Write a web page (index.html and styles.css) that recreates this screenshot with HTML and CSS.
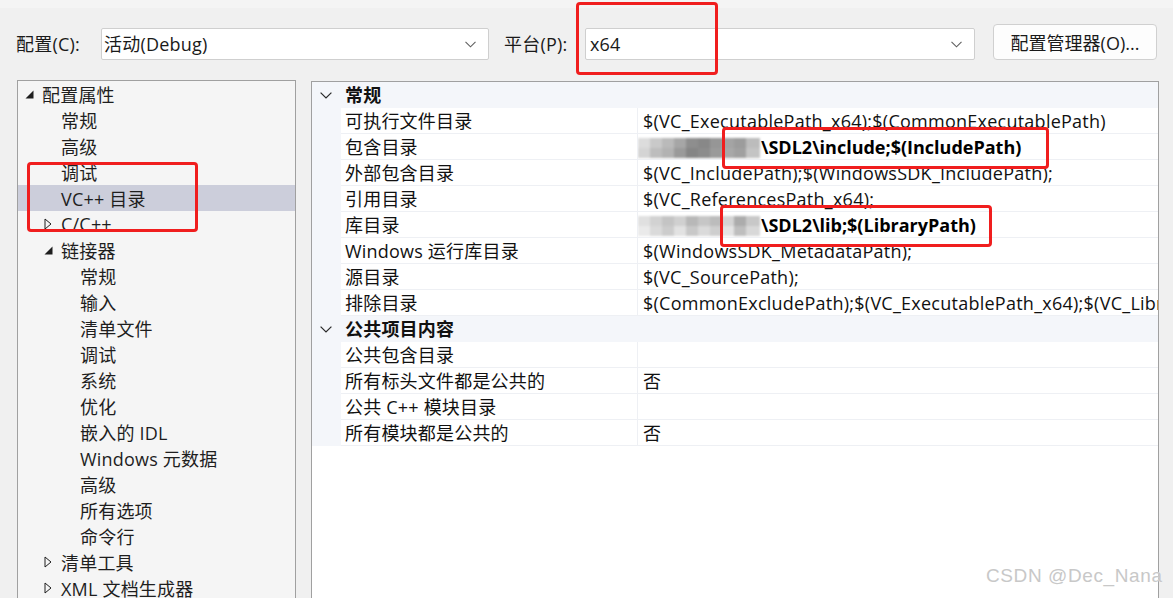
FILE: index.html
```html
<!DOCTYPE html>
<html>
<head>
<meta charset="utf-8">
<link rel="stylesheet" href="styles.css">
</head>
<body>
<div class="app">
  <div class="band"></div>
  <div class="topbar">
    <span class="lbl lbl1">配置(C):</span>
    <div class="combo combo1"><span class="ctext">活动(Debug)</span><svg class="chev" width="11" height="7" viewBox="0 0 11 7"><polyline points="0.5,0.8 5.5,5.8 10.5,0.8" fill="none" stroke="#606060" stroke-width="1.1"/></svg></div>
    <span class="lbl lbl2">平台(P):</span>
    <div class="combo combo2"><span class="ctext">x64</span><svg class="chev" width="11" height="7" viewBox="0 0 11 7"><polyline points="0.5,0.8 5.5,5.8 10.5,0.8" fill="none" stroke="#606060" stroke-width="1.1"/></svg></div>
    <button class="btn">配置管理器(O)...</button>
  </div>
  <div class="main">
    <div class="tree">
      <div class="trow l0"><span class="tg"><svg width="9" height="9" viewBox="0 0 9 9"><polygon points="8.5,0.5 8.5,8.5 0.5,8.5" fill="#1e1e1e"/></svg></span><span>配置属性</span></div>
      <div class="trow l1"><span class="tg"></span><span>常规</span></div>
      <div class="trow l1"><span class="tg"></span><span>高级</span></div>
      <div class="trow l1"><span class="tg"></span><span>调试</span></div>
      <div class="trow l1 sel"><span class="tg"></span><span>VC++ 目录</span></div>
      <div class="trow l1"><span class="tg"><svg width="8" height="12" viewBox="0 0 8 12"><polygon points="1,1 7,6 1,11" fill="none" stroke="#1e1e1e" stroke-width="1"/></svg></span><span>C/C++</span></div>
      <div class="trow l1"><span class="tg"><svg width="9" height="9" viewBox="0 0 9 9"><polygon points="8.5,0.5 8.5,8.5 0.5,8.5" fill="#1e1e1e"/></svg></span><span>链接器</span></div>
      <div class="trow l2"><span class="tg"></span><span>常规</span></div>
      <div class="trow l2"><span class="tg"></span><span>输入</span></div>
      <div class="trow l2"><span class="tg"></span><span>清单文件</span></div>
      <div class="trow l2"><span class="tg"></span><span>调试</span></div>
      <div class="trow l2"><span class="tg"></span><span>系统</span></div>
      <div class="trow l2"><span class="tg"></span><span>优化</span></div>
      <div class="trow l2"><span class="tg"></span><span>嵌入的 IDL</span></div>
      <div class="trow l2"><span class="tg"></span><span>Windows 元数据</span></div>
      <div class="trow l2"><span class="tg"></span><span>高级</span></div>
      <div class="trow l2"><span class="tg"></span><span>所有选项</span></div>
      <div class="trow l2"><span class="tg"></span><span>命令行</span></div>
      <div class="trow l1"><span class="tg"><svg width="8" height="12" viewBox="0 0 8 12"><polygon points="1,1 7,6 1,11" fill="none" stroke="#1e1e1e" stroke-width="1"/></svg></span><span>清单工具</span></div>
      <div class="trow l1"><span class="tg"><svg width="8" height="12" viewBox="0 0 8 12"><polygon points="1,1 7,6 1,11" fill="none" stroke="#1e1e1e" stroke-width="1"/></svg></span><span>XML 文档生成器</span></div>
    </div>
    <div class="grid">
      <div class="cat">
        <span class="gut"><svg width="12" height="7" viewBox="0 0 12 7"><polyline points="0.6,0.6 6,6 11.4,0.6" fill="none" stroke="#2a2a2a" stroke-width="1.2"/></svg></span>
        <span class="catname">常规</span>
      </div>
      <div class="prow"><span class="gut"></span><span class="pname">可执行文件目录</span><span class="pval">$(VC_ExecutablePath_x64);$(CommonExecutablePath)</span></div>
      <div class="prow"><span class="gut"></span><span class="pname">包含目录</span><span class="pval"><span class="blur blur1"></span><b>\SDL2\include;$(IncludePath)</b></span></div>
      <div class="prow"><span class="gut"></span><span class="pname">外部包含目录</span><span class="pval">$(VC_IncludePath);$(WindowsSDK_IncludePath);</span></div>
      <div class="prow"><span class="gut"></span><span class="pname">引用目录</span><span class="pval">$(VC_ReferencesPath_x64);</span></div>
      <div class="prow"><span class="gut"></span><span class="pname">库目录</span><span class="pval"><span class="blur blur2"></span><b>\SDL2\lib;$(LibraryPath)</b></span></div>
      <div class="prow"><span class="gut"></span><span class="pname">Windows 运行库目录</span><span class="pval">$(WindowsSDK_MetadataPath);</span></div>
      <div class="prow"><span class="gut"></span><span class="pname">源目录</span><span class="pval">$(VC_SourcePath);</span></div>
      <div class="prow"><span class="gut"></span><span class="pname">排除目录</span><span class="pval">$(CommonExcludePath);$(VC_ExecutablePath_x64);$(VC_LibraryPath_x64)</span></div>
      <div class="cat">
        <span class="gut"><svg width="12" height="7" viewBox="0 0 12 7"><polyline points="0.6,0.6 6,6 11.4,0.6" fill="none" stroke="#2a2a2a" stroke-width="1.2"/></svg></span>
        <span class="catname">公共项目内容</span>
      </div>
      <div class="prow"><span class="gut"></span><span class="pname">公共包含目录</span><span class="pval"></span></div>
      <div class="prow"><span class="gut"></span><span class="pname">所有标头文件都是公共的</span><span class="pval">否</span></div>
      <div class="prow"><span class="gut"></span><span class="pname">公共 C++ 模块目录</span><span class="pval"></span></div>
      <div class="prow"><span class="gut"></span><span class="pname">所有模块都是公共的</span><span class="pval">否</span></div>
    </div>
  </div>
  <div class="mark mark1"></div>
  <div class="mark mark2"></div>
  <div class="mark mark3"></div>
  <div class="mark mark4"></div>
  <div class="wm">CSDN @Dec_Nana</div>
</div>
</body>
</html>
```

FILE: styles.css
```css
* { box-sizing: border-box; }
html, body { margin: 0; padding: 0; }
body {
  font-family: "Open Sans", "Noto Sans CJK SC", sans-serif;
  font-size: 18px;
  letter-spacing: 0.2px;
  color: #1a1a1a;
}
.app {
  position: relative;
  width: 1173px;
  height: 598px;
  overflow: hidden;
  background: #f0f0f0;
}
.band { height: 8px; background: #f4f4f4; }
.topbar {
  display: flex;
  align-items: flex-start;
  height: 72px;
  padding-top: 16px;
  padding-left: 16px;
}
.lbl {
  margin-top: 4px;
  height: 32px;
  line-height: 32px;
  white-space: nowrap;
}
.lbl1 { width: 85px; }
.lbl2 { width: 81px; margin-left: 15px; }
.combo {
  margin-top: 4px;
  height: 32px;
  background: #fff;
  border: 1px solid #cfcfcf;
  border-radius: 2px;
  display: flex;
  align-items: center;
  justify-content: space-between;
  padding: 0 12px 0 2px;
}
.combo1 { width: 388px; }
.combo2 { width: 390px; padding-left: 4px; }
.ctext { line-height: 30px; }
.chev { display: block; }
.btn {
  margin-left: 18px;
  width: 164px;
  height: 36px;
  background: #fdfdfd;
  border: 1px solid #d0d0d0;
  border-radius: 4px;
  font: inherit;
  color: #1a1a1a;
  padding: 0;
}
.main { display: flex; align-items: flex-start; }
.tree {
  margin-left: 17px;
  width: 279px;
  height: 560px;
  background: #f5f5f5;
  border: 1px solid #a0a0a0;
}
.trow {
  height: 26px;
  display: flex;
  align-items: center;
  white-space: nowrap;
  color: #1e1e1e;
}
.trow.l0 { padding-left: 7px; }
.trow.l1 { padding-left: 26px; }
.trow.l2 { padding-left: 45px; }
.trow.sel { background: #cccedb; }
.tg { width: 17px; flex: none; display: flex; align-items: center; }
.tg svg { display: block; }
.grid {
  margin-left: 15px;
  margin-top: 1px;
  width: 848px;
  height: 560px;
  background: #fff;
  border: 1px solid #a0a0a0;
  border-bottom: none;
}
.cat, .prow {
  display: grid;
  grid-template-columns: 29px 296px 1fr;
  height: 26px;
}
.cat { background: #f4f6fa; }
.gut {
  background: #f4f6fa;
  display: flex;
  align-items: center;
  padding-left: 8px;
}
.catname {
  grid-column: 2 / 4;
  font-weight: bold;
  padding-left: 4px;
  padding-top: 1px;
  line-height: 25px;
  color: #111;
}
.pname {
  padding-left: 4px;
  padding-top: 2px;
  line-height: 23px;
  border-bottom: 1px solid #eef0f4;
  white-space: nowrap;
  overflow: hidden;
  color: #111;
}
.pval {
  padding-left: 5px;
  padding-top: 2px;
  line-height: 23px;
  border-left: 1px solid #eef0f4;
  border-bottom: 1px solid #eef0f4;
  white-space: nowrap;
  overflow: hidden;
  color: #111;
  display: flex;
  align-items: center;
  letter-spacing: 0.25px;
}
.pval b { font-weight: bold; color: #000; letter-spacing: 0; }
.blur {
  display: inline-block;
  flex: none;
  width: 122px;
  height: 20px;
  margin-left: -5px;
  margin-right: 1px;
  filter: blur(1.2px);
}
.blur1 {
  background:
    linear-gradient(90deg, #dcdcdc 0 12px, #c9c9c9 12px 24px, #bababa 24px 36px, #a6a6a6 36px 48px, #8e8e8e 48px 60px, #888 60px 72px, #969696 72px 84px, #a4a4a4 84px 96px, #9c9c9c 96px 108px, #bcbcbc 108px 122px) top / 100% 50% no-repeat,
    linear-gradient(90deg, #d4d4d4 0 12px, #bdbdbd 12px 24px, #b2b2b2 24px 36px, #9a9a9a 36px 48px, #858585 48px 60px, #8c8c8c 60px 72px, #9a9a9a 72px 84px, #a8a8a8 84px 96px, #a0a0a0 96px 108px, #c4c4c4 108px 122px) bottom / 100% 50% no-repeat;
}
.blur2 {
  background:
    linear-gradient(90deg, #e0e0e0 0 12px, #d2d2d2 12px 24px, #c4c4c4 24px 36px, #d0d0d0 36px 48px, #b8b8b8 48px 60px, #c6c6c6 60px 72px, #bcbcbc 72px 84px, #d4d4d4 84px 96px, #acacac 96px 108px, #c8c8c8 108px 122px) top / 100% 50% no-repeat,
    linear-gradient(90deg, #eaeaea 0 12px, #dadada 12px 24px, #cccccc 24px 36px, #e2e2e2 36px 48px, #c8c8c8 48px 60px, #dadada 60px 72px, #cecece 72px 84px, #e4e4e4 84px 96px, #bebebe 96px 108px, #d8d8d8 108px 122px) bottom / 100% 50% no-repeat;
}
.mark {
  position: absolute;
  border: 3px solid #f01e1e;
  border-radius: 4px;
}
.mark1 { left: 576px; top: 2px; width: 142px; height: 73px; }
.mark2 { left: 27px; top: 162px; width: 171px; height: 70px; }
.mark3 { left: 722px; top: 127px; width: 327px; height: 42px; }
.mark4 { left: 720px; top: 205px; width: 272px; height: 42px; }
.wm {
  position: absolute;
  left: 986px;
  top: 565px;
  font-family: "Liberation Sans", Arial, sans-serif;
  font-size: 19px;
  letter-spacing: 0.6px;
  color: #c8c8c8;
  text-shadow: 0 0 1px #fff;
  white-space: nowrap;
}
```
